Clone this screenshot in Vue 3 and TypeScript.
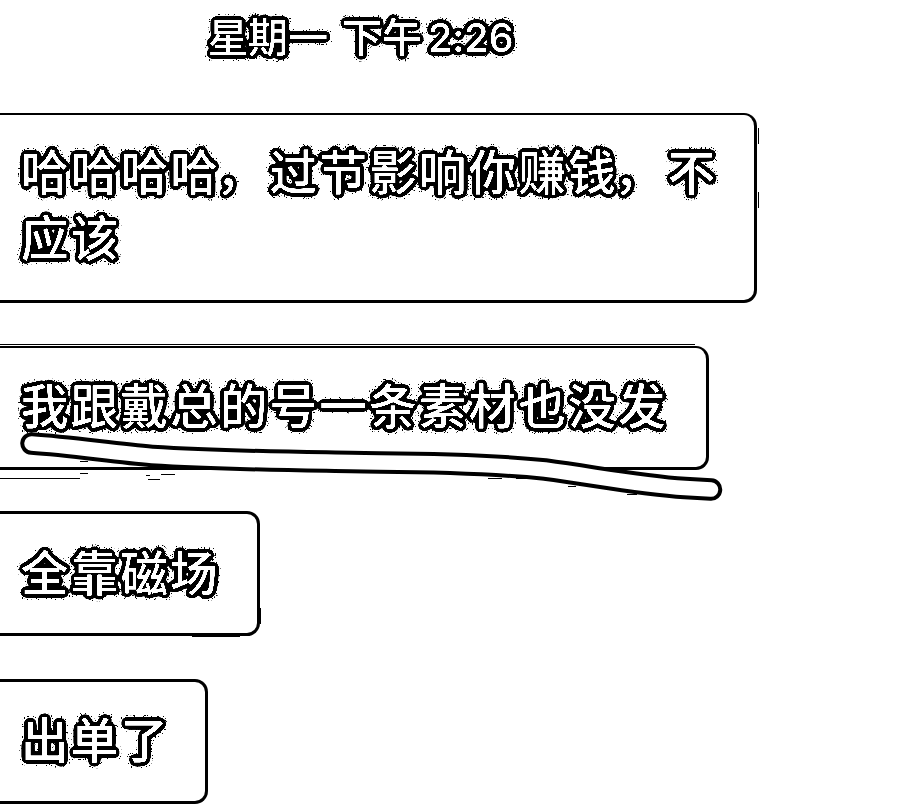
<script setup lang="ts">
interface Message {
  id: string
  lines: string[][]
}

const time = { day: '星期一', period: '下午', clock: '2:26' }

const messages: Message[] = [
  { id: 'first', lines: [['哈哈哈哈', '，', '过节影响你赚钱', '，', '不'], ['应该']] },
  { id: 'second', lines: [['我跟戴总的号一条素材也没发']] },
  { id: 'third', lines: [['全靠磁场']] },
  { id: 'fourth', lines: [['出单了']] },
]

const marker =
  'M31.5 443.5 C70 446 115 453 152 456 C230 461 310 461 380 462.5 C450 463 500 465 545 469.5 C600 477 640 485 685 488 L711 489.5'
</script>

<template>
  <main class="chat">
    <svg class="defs" width="0" height="0" aria-hidden="true">
      <filter id="outline" x="-3%" y="-10%" width="106%" height="120%" color-interpolation-filters="sRGB">
        <feGaussianBlur in="SourceAlpha" stdDeviation="1.9" result="soft" />
        <feColorMatrix in="soft" values="0 0 0 0 0  0 0 0 0 0  0 0 0 0 0  0 0 0 80 -1.9" result="edge" />
        <feMorphology in="edge" operator="dilate" radius="2" result="halo" />
        <feTurbulence type="fractalNoise" baseFrequency="0.7" numOctaves="2" seed="4" />
        <feColorMatrix values="0 0 0 0 0  0 0 0 0 0  0 0 0 0 0  40 0 0 0 -25.5" result="specks" />
        <feComposite in="specks" in2="halo" operator="in" result="fringe" />
        <feComponentTransfer in="SourceGraphic" result="crisp">
          <feFuncA type="linear" slope="6" intercept="-2.6" />
        </feComponentTransfer>
        <feMerge>
          <feMergeNode in="fringe" />
          <feMergeNode in="edge" />
          <feMergeNode in="crisp" />
        </feMerge>
      </filter>
    </svg>

    <header class="stamp">
      <span class="day">{{ time.day }}</span>
      <span class="period">{{ time.period }}</span>
      <span class="clock">{{ time.clock }}</span>
    </header>

    <section v-for="m in messages" :key="m.id" class="bubble" :class="m.id">
      <p v-for="(line, i) in m.lines" :key="i" class="line"><span v-for="(part, j) in line" :key="j" :class="{ comma: part === '，' }">{{ part }}</span></p>
    </section>

    <svg class="marker" width="921" height="809" viewBox="0 0 921 809" aria-hidden="true">
      <path class="trace" d="M0 478.5H80M146 475.5h4M161 474.5h14M148 479.5h12M80 461.5h8M80 473.5h8M488 478.5h14M516 478.5h10M568 486.5h8M627 494.5h10M758.5 128v16M758.5 192v16M260.5 608v16M192 636.5h48M16 803.5h16" />
      <path class="edge" :d="marker" />
      <path class="core" :d="marker" />
    </svg>
  </main>
</template>

<style>
body {
  background: #fff;
}
</style>

<style scoped>
.chat {
  position: relative;
  box-sizing: border-box;
  width: 921px;
  height: 809px;
  overflow: hidden;
  display: flex;
  flex-direction: column;
  align-items: flex-start;
  background: #fff;
  color: #fff;
  font-family: 'Noto Sans CJK SC', sans-serif;
}

.defs {
  position: absolute;
}

.stamp {
  display: flex;
  height: 70px;
  margin: 0 0 43px 208px;
  font-size: 40px;
  line-height: 70px;
  font-weight: 500;
  white-space: nowrap;
  filter: url(#outline);
}

.period {
  margin-left: 14px;
}

.clock {
  margin-left: 6px;
  padding-top: 3px;
  font-family: Inter, sans-serif;
  font-size: 39.5px;
  font-feature-settings: 'calt' 0;
}

.bubble {
  position: relative;
  box-sizing: border-box;
  border: 3px solid #000;
  border-left: 0;
  border-radius: 0 13px 13px 0;
  padding-left: 21px;
}

.line {
  margin: 0;
  height: 66px;
  font-size: 47.4px;
  letter-spacing: 2.35px;
  line-height: 66px;
  font-weight: 500;
  white-space: nowrap;
  filter: url(#outline);
}

.comma {
  position: relative;
  left: -4px;
  top: -1px;
}

.first {
  width: 757px;
  height: 190px;
  border-top-width: 2px;
  padding-top: 22px;
}

.second {
  width: 709px;
  height: 124px;
  margin-top: 43px;
  border-top-width: 2px;
  padding-top: 23px;
}

.second::before {
  content: '';
  position: absolute;
  left: 0;
  top: -4px;
  width: 695px;
  height: 1px;
  background: #000;
}

.third {
  width: 260px;
  height: 125px;
  margin-top: 41px;
  padding-top: 24px;
}

.fourth {
  width: 208px;
  height: 125px;
  margin-top: 43px;
  padding-top: 23px;
}

.marker {
  position: absolute;
  left: 0;
  top: 0;
}

.marker path {
  fill: none;
  stroke-linecap: round;
  stroke-linejoin: round;
}

.marker .trace {
  stroke: #000;
  stroke-width: 1;
  stroke-linecap: butt;
}

.marker .edge {
  stroke: #000;
  stroke-width: 22.5px;
}

.marker .core {
  stroke: #fff;
  stroke-width: 14.5px;
}
</style>
